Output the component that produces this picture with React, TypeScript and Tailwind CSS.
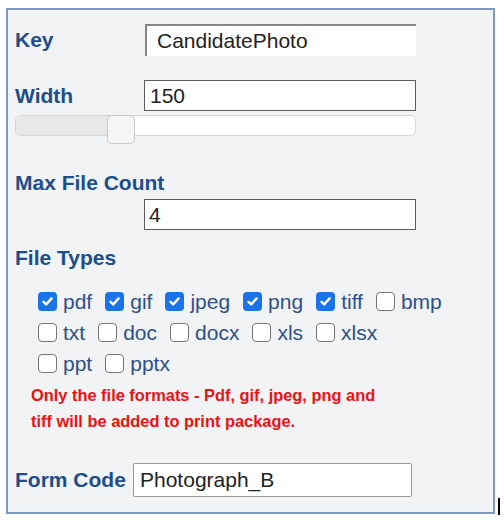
import React from "react";

const rows: { name: string; checked: boolean }[][] = [
  [
    { name: "pdf", checked: true },
    { name: "gif", checked: true },
    { name: "jpeg", checked: true },
    { name: "png", checked: true },
    { name: "tiff", checked: true },
    { name: "bmp", checked: false },
  ],
  [
    { name: "txt", checked: false },
    { name: "doc", checked: false },
    { name: "docx", checked: false },
    { name: "xls", checked: false },
    { name: "xlsx", checked: false },
  ],
  [
    { name: "ppt", checked: false },
    { name: "pptx", checked: false },
  ],
];

const CheckBox = ({ checked }: { checked: boolean }) =>
  checked ? (
    <span className="flex h-[19px] w-[19px] items-center justify-center rounded-[4px] bg-[#1a73e8]">
      <svg width="13" height="13" viewBox="0 0 13 13" fill="none">
        <path
          d="M2.5 6.8 L5.2 9.4 L10.6 3.4"
          stroke="white"
          strokeWidth="2.4"
          strokeLinecap="round"
          strokeLinejoin="round"
        />
      </svg>
    </span>
  ) : (
    <span className="block h-[19px] w-[19px] rounded-[4px] border-[1.5px] border-[#767676] bg-white" />
  );

const App = () => {
  return (
    <div className="relative h-[524px] w-[504px] bg-white [font-family:'Liberation_Sans',Arial,sans-serif]">
      <div className="ml-[6px] pt-[8px]">
        <div className="h-[506px] w-[489px] border-2 border-[#7b98cb] bg-[#f1f3f5] pl-[7px]">
          {/* Key */}
          <div className="mt-[14px] flex h-[32px] items-center">
            <span className="w-[130px] text-[21px] font-bold text-[#1d4e8a]">Key</span>
            <div className="flex h-[32px] w-[271px] items-center border-t-2 border-l-2 border-[#858585] bg-white pl-[10px] text-[21px] text-[#222]">
              CandidatePhoto
            </div>
          </div>

          {/* Width */}
          <div className="mt-[24px] flex h-[31px] items-center">
            <span className="w-[129px] text-[21px] font-bold text-[#1d4e8a]">Width</span>
            <div className="flex h-[31px] w-[272px] items-center border border-[#5a5a5a] bg-white pl-[5px] text-[21px] text-[#222]">
              150
            </div>
          </div>

          {/* slider */}
          <div className="relative mt-[3px] h-[29px] w-[401px]">
            <div className="mt-[4px] flex h-[21px] overflow-hidden rounded-[5px] border border-[#d6d6d6] bg-white">
              <div className="w-[100px] bg-[#e8e8e8]" />
            </div>
            <div className="absolute left-[92px] top-0 h-[29px] w-[28px] rounded-[5px] border border-[#c8c8c8] bg-[#f6f6f6]" />
          </div>

          {/* Max File Count */}
          <div className="mt-[27px] h-[24px] text-[21px] font-bold leading-[24px] text-[#1d4e8a]">
            Max File Count
          </div>
          <div className="ml-[129px] mt-[4px] flex h-[31px] w-[272px] items-center border border-[#5a5a5a] bg-white pl-[4px] text-[21px] text-[#222]">
            4
          </div>

          {/* File Types */}
          <div className="mt-[16px] h-[24px] text-[21px] font-bold leading-[24px] text-[#1d4e8a]">
            File Types
          </div>
          <div className="mt-[16px] pl-[23px]">
            {rows.map((row, i) => (
              <div key={i} className="flex h-[31px] items-center gap-[13px]">
                {row.map((t) => (
                  <label key={t.name} className="flex items-center">
                    <CheckBox checked={t.checked} />
                    <span className="ml-[6px] text-[21px] leading-[31px] text-[#2e5189]">{t.name}</span>
                  </label>
                ))}
              </div>
            ))}
          </div>

          {/* note */}
          <p className="ml-[16px] mt-[3px] text-[16.4px] font-bold leading-[26px] text-[#ee1111]">
            Only the file formats - Pdf, gif, jpeg, png and
            <br />
            tiff will be added to print package.
          </p>

          {/* Form Code */}
          <div className="mt-[29px] flex h-[34px] items-center">
            <span className="w-[118px] text-[21px] font-bold text-[#1d4e8a]">Form Code</span>
            <div className="flex h-[34px] w-[279px] items-center rounded-[2px] border border-[#999] bg-white pl-[6px] text-[21px] text-[#222]">
              Photograph_B
            </div>
          </div>
        </div>
      </div>
      <div className="absolute left-[498px] top-[498px] h-[17px] w-[2px] bg-black" />
    </div>
  );
};

export default App;
